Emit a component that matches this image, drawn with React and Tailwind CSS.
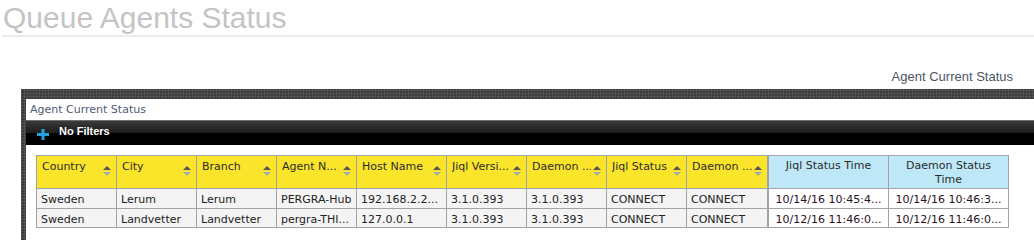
import React from 'react';

const yellowCols = [
  { label: 'Country', w: 'w-[80px]' },
  { label: 'City', w: 'w-[80px]' },
  { label: 'Branch', w: 'w-[80px]' },
  { label: 'Agent N...', w: 'w-[80px]' },
  { label: 'Host Name', w: 'w-[90px]' },
  { label: 'Jiql Versi...', w: 'w-[80px]' },
  { label: 'Daemon ...', w: 'w-[80px]' },
  { label: 'Jiql Status', w: 'w-[80px]' },
  { label: 'Daemon ...', w: 'w-[82px]', last: true },
];

const rows = [
  {
    cells: ['Sweden', 'Lerum', 'Lerum', 'PERGRA-Hub', '192.168.2.2...', '3.1.0.393', '3.1.0.393', 'CONNECT', 'CONNECT'],
    times: ['10/14/16 10:45:4...', '10/14/16 10:46:3...'],
    h: 'h-[20px]',
  },
  {
    cells: ['Sweden', 'Landvetter', 'Landvetter', 'pergra-THI...', '127.0.0.1', '3.1.0.393', '3.1.0.393', 'CONNECT', 'CONNECT'],
    times: ['10/12/16 11:46:0...', '10/12/16 11:46:0...'],
    h: 'h-[19px]',
  },
];

function SortIcon() {
  return (
    <svg width="8" height="10" viewBox="0 0 8 10" className="mt-[6px] shrink-0">
      <polygon points="0,4 4,0 8,4" fill="#555" />
      <polygon points="0,6 8,6 4,10" fill="#a9a9a9" />
    </svg>
  );
}

function PlusIcon() {
  return (
    <svg width="12" height="11" viewBox="0 0 12 11" className="mt-[5px] shrink-0">
      <rect x="4.5" y="0" width="3" height="11" fill="#22a2de" />
      <rect x="0" y="4" width="12" height="3" fill="#22a2de" />
    </svg>
  );
}

export default function App() {
  const frameBg =
    'bg-[#3b3b3b] bg-[image:repeating-linear-gradient(90deg,rgba(255,255,255,0.09)_0px,rgba(255,255,255,0.09)_1px,transparent_1px,transparent_3px),repeating-linear-gradient(0deg,rgba(255,255,255,0.09)_0px,rgba(255,255,255,0.09)_1px,transparent_1px,transparent_3px)]';

  return (
    <div className="h-[240px] overflow-hidden bg-white font-['Liberation_Sans',Arial,sans-serif]">
      <h1 className="mt-[3px] pl-[3px] text-[30px] leading-[30px] font-normal text-[#c4c4c4]">
        Queue Agents Status
      </h1>
      <div className="ml-[2px] mt-[2px] h-[2px] bg-[#ececec]" />

      <div className="mt-[32px] pr-[21px] text-right text-[13px] leading-[15px] text-[#4c5566]">
        Agent Current Status
      </div>

      <div className={`ml-[21px] mt-[5px] pl-[5px] pt-[10px] ${frameBg}`}>
        <div className="bg-white pb-[40px]">
          <div className="h-[21px] pl-[4px] pt-[1px] font-['DejaVu_Sans',sans-serif] text-[11px] leading-[20px] text-[#4d5a70]">
            Agent Current Status
          </div>

          <div className="h-[25px] border-t border-[#6e6e6e] bg-[linear-gradient(to_bottom,#3a3a3a_0%,#1e1e1e_48%,#000_50%,#000_100%)]">
            <div className="flex h-full items-center gap-[10px] pb-[3px] pl-[11px]">
              <PlusIcon />
              <span className="text-[11px] font-bold text-white [text-shadow:0_1px_1px_#000]">
                No Filters
              </span>
            </div>
          </div>

          <div className="pl-[10px] pt-[10px] font-['DejaVu_Sans',sans-serif] text-[11px] text-[#222]">
            <div className="inline-flex flex-col border-l border-t border-[#a3a3a3]">
              <div className="flex">
                {yellowCols.map((c, i) => (
                  <div
                    key={i}
                    className={`flex h-[33px] justify-between gap-[2px] border-b border-[#a3a3a3] bg-[#fae52b] pl-[5px] pr-[5px] pt-[4px] leading-[13px] text-[#2b2b2b] ${c.w} ${
                      c.last ? 'border-r-2' : 'border-r'
                    }`}
                  >
                    <span className="min-w-0 overflow-hidden whitespace-nowrap">{c.label}</span>
                    <SortIcon />
                  </div>
                ))}
                <div className="h-[33px] w-[120px] border-b border-r border-[#a3a3a3] bg-[#bee8f8] pt-[3px] text-center leading-[14px] text-[#2b2b2b]">
                  Jiql Status Time
                </div>
                <div className="h-[33px] w-[120px] border-b border-r border-[#a3a3a3] bg-[#bee8f8] px-[10px] pt-[3px] text-center leading-[14px] text-[#2b2b2b]">
                  Daemon Status Time
                </div>
              </div>

              {rows.map((r, ri) => (
                <div key={ri} className="flex">
                  {r.cells.map((v, ci) => (
                    <div
                      key={ci}
                      className={`${r.h} overflow-hidden whitespace-nowrap border-b border-[#a3a3a3] bg-[#f4f4f4] pl-[4px] pt-[4px] leading-[13px] ${yellowCols[ci].w} ${
                        yellowCols[ci].last ? 'border-r-2' : 'border-r'
                      }`}
                    >
                      {v}
                    </div>
                  ))}
                  {r.times.map((t, ti) => (
                    <div
                      key={ti}
                      className={`${r.h} w-[120px] overflow-hidden whitespace-nowrap border-b border-r border-[#a3a3a3] bg-white pt-[4px] text-center leading-[13px] text-[#2a1226]`}
                    >
                      {t}
                    </div>
                  ))}
                </div>
              ))}
            </div>
          </div>
        </div>
      </div>
    </div>
  );
}
